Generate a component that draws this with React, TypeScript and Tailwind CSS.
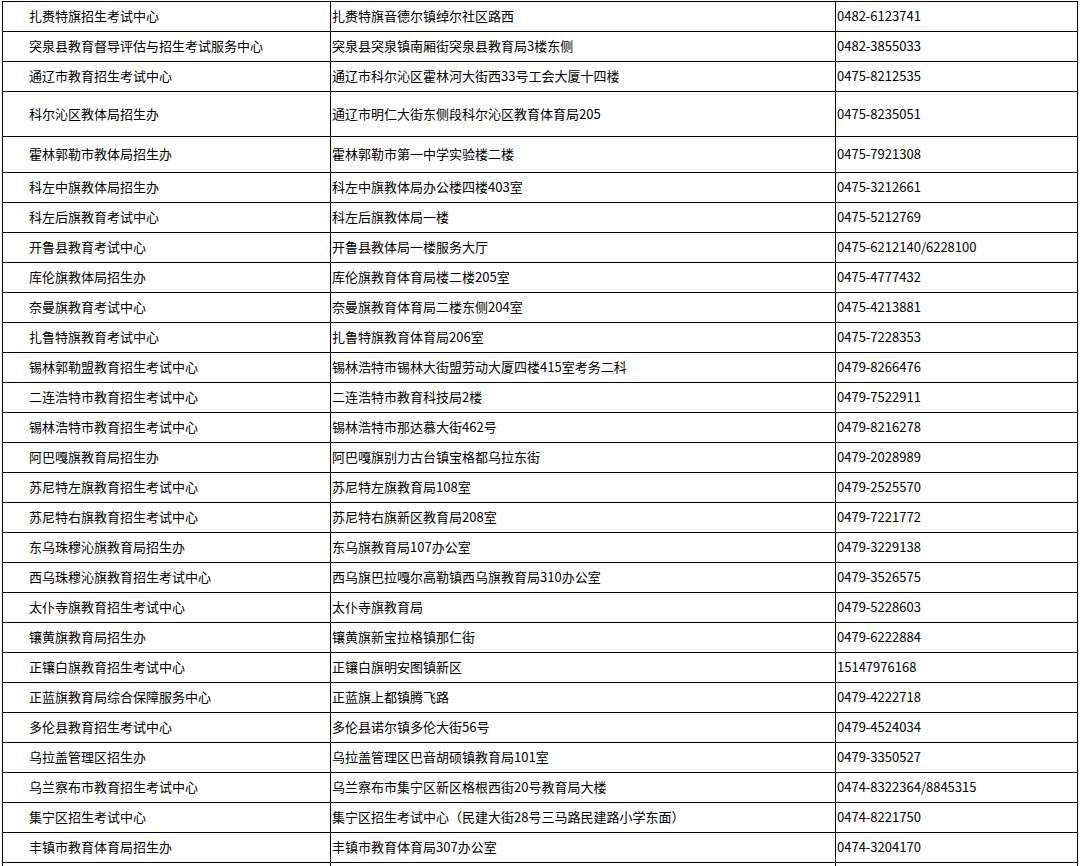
import React from "react";

type Row = [string, string, string, number?];

const rows: Row[] = [
  ["扎赉特旗招生考试中心", "扎赉特旗音德尔镇绰尔社区路西", "0482-6123741"],
  ["突泉县教育督导评估与招生考试服务中心", "突泉县突泉镇南厢街突泉县教育局3楼东侧", "0482-3855033"],
  ["通辽市教育招生考试中心", "通辽市科尔沁区霍林河大街西33号工会大厦十四楼", "0475-8212535"],
  ["科尔沁区教体局招生办", "通辽市明仁大街东侧段科尔沁区教育体育局205", "0475-8235051", 45],
  ["霍林郭勒市教体局招生办", "霍林郭勒市第一中学实验楼二楼", "0475-7921308", 36],
  ["科左中旗教体局招生办", "科左中旗教体局办公楼四楼403室", "0475-3212661"],
  ["科左后旗教育考试中心", "科左后旗教体局一楼", "0475-5212769"],
  ["开鲁县教育考试中心", "开鲁县教体局一楼服务大厅", "0475-6212140/6228100"],
  ["库伦旗教体局招生办", "库伦旗教育体育局楼二楼205室", "0475-4777432"],
  ["奈曼旗教育考试中心", "奈曼旗教育体育局二楼东侧204室", "0475-4213881"],
  ["扎鲁特旗教育考试中心", "扎鲁特旗教育体育局206室", "0475-7228353"],
  ["锡林郭勒盟教育招生考试中心", "锡林浩特市锡林大街盟劳动大厦四楼415室考务二科", "0479-8266476"],
  ["二连浩特市教育招生考试中心", "二连浩特市教育科技局2楼", "0479-7522911"],
  ["锡林浩特市教育招生考试中心", "锡林浩特市那达慕大街462号", "0479-8216278"],
  ["阿巴嘎旗教育局招生办", "阿巴嘎旗别力古台镇宝格都乌拉东街", "0479-2028989"],
  ["苏尼特左旗教育招生考试中心", "苏尼特左旗教育局108室", "0479-2525570"],
  ["苏尼特右旗教育招生考试中心", "苏尼特右旗新区教育局208室", "0479-7221772"],
  ["东乌珠穆沁旗教育局招生办", "东乌旗教育局107办公室", "0479-3229138"],
  ["西乌珠穆沁旗教育招生考试中心", "西乌旗巴拉嘎尔高勒镇西乌旗教育局310办公室", "0479-3526575"],
  ["太仆寺旗教育招生考试中心", "太仆寺旗教育局", "0479-5228603"],
  ["镶黄旗教育局招生办", "镶黄旗新宝拉格镇那仁街", "0479-6222884"],
  ["正镶白旗教育招生考试中心", "正镶白旗明安图镇新区", "15147976168"],
  ["正蓝旗教育局综合保障服务中心", "正蓝旗上都镇腾飞路", "0479-4222718"],
  ["多伦县教育招生考试中心", "多伦县诺尔镇多伦大街56号", "0479-4524034"],
  ["乌拉盖管理区招生办", "乌拉盖管理区巴音胡硕镇教育局101室", "0479-3350527"],
  ["乌兰察布市教育招生考试中心", "乌兰察布市集宁区新区格根西街20号教育局大楼", "0474-8322364/8845315"],
  ["集宁区招生考试中心", "集宁区招生考试中心（民建大街28号三马路民建路小学东面）", "0474-8221750"],
  ["丰镇市教育体育局招生办", "丰镇市教育体育局307办公室", "0474-3204170"],
  ["", "", ""],
];

export default function App() {
  return (
    <div
      className="w-[1080px] h-[866px] overflow-hidden bg-white text-black text-[13px] leading-[15px]"
      style={{ fontFamily: '"Noto Sans CJK SC", "Noto Sans", sans-serif' }}
    >
      <div className="ml-[2px] mt-[1px] w-[1076px] border-l border-t border-black">
        {rows.map(([a, b, c, h], i) => (
          <div
            key={i}
            className="flex border-b border-black"
            style={{ height: h ?? 30 }}
          >
            <div className="w-[328px] shrink-0 border-r border-black flex items-center pl-[26px] pb-[2px] whitespace-nowrap">
              {a}
            </div>
            <div className="w-[505px] shrink-0 border-r border-black flex items-center pl-[1px] pb-[2px] whitespace-nowrap">
              {b}
            </div>
            <div className="w-[242px] shrink-0 border-r border-black flex items-center pl-[1px] pb-[2px] whitespace-nowrap">
              {c}
            </div>
          </div>
        ))}
      </div>
    </div>
  );
}
